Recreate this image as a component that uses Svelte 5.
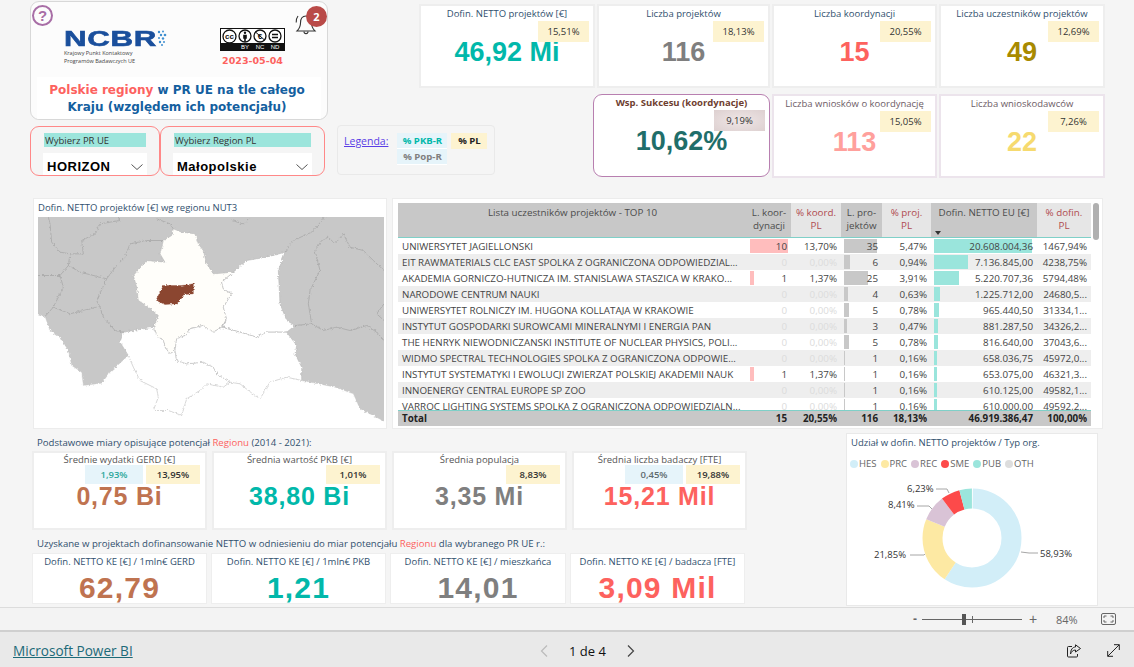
<script>
  const kpiTop = [
    { title: 'Dofin. NETTO projektów [€]', value: '46,92 Mi', pct: '15,51%', color: '#01b8aa' },
    { title: 'Liczba projektów', value: '116', pct: '18,13%', color: '#7f7f7f' },
    { title: 'Liczba koordynacji', value: '15', pct: '20,55%', color: '#fd625e' },
    { title: 'Liczba uczestników projektów', value: '49', pct: '12,69%', color: '#a88a00' }
  ];

  const potential = [
    { title: 'Średnie wydatki GERD [€]', value: '0,75 Bi', blue: '1,93%', blueColor: '#2fa89c', pct: '13,95%', color: '#bf7350' },
    { title: 'Średnia wartość PKB [€]', value: '38,80 Bi', pct: '1,01%', color: '#01b8aa' },
    { title: 'Średnia populacja', value: '3,35 Mi', pct: '8,83%', color: '#7f7f7f' },
    { title: 'Średnia liczba badaczy [FTE]', value: '15,21 Mil', blue: '0,45%', blueColor: '#5f6b70', pct: '19,88%', color: '#fd625e' }
  ];

  const ratios = [
    { title: 'Dofin. NETTO KE [€] / 1mln€ GERD', value: '62,79', color: '#bf7350' },
    { title: 'Dofin. NETTO KE [€] / 1mln€ PKB', value: '1,21', color: '#01b8aa' },
    { title: 'Dofin. NETTO KE [€] / mieszkańca', value: '14,01', color: '#7f7f7f' },
    { title: 'Dofin. NETTO KE [€] / badacza [FTE]', value: '3,09 Mil', color: '#fd625e' }
  ];

  const rows = [
    ['UNIWERSYTET JAGIELLONSKI', 10, '13,70%', 35, '5,47%', 20608004.36, '20.608.004,36', '1467,94%'],
    ['EIT RAWMATERIALS CLC EAST SPOLKA Z OGRANICZONA ODPOWIEDZIAL...', 0, '0,00%', 6, '0,94%', 7136845, '7.136.845,00', '4238,75%'],
    ['AKADEMIA GORNICZO-HUTNICZA IM. STANISLAWA STASZICA W KRAKO...', 1, '1,37%', 25, '3,91%', 5220707.36, '5.220.707,36', '5794,48%'],
    ['NARODOWE CENTRUM NAUKI', 0, '0,00%', 4, '0,63%', 1225712, '1.225.712,00', '24680,5...'],
    ['UNIWERSYTET ROLNICZY IM. HUGONA KOLLATAJA W KRAKOWIE', 0, '0,00%', 5, '0,78%', 965440.5, '965.440,50', '31334,1...'],
    ['INSTYTUT GOSPODARKI SUROWCAMI MINERALNYMI I ENERGIA PAN', 0, '0,00%', 3, '0,47%', 881287.5, '881.287,50', '34326,2...'],
    ['THE HENRYK NIEWODNICZANSKI INSTITUTE OF NUCLEAR PHYSICS, POLI...', 0, '0,00%', 5, '0,78%', 816640, '816.640,00', '37043,6...'],
    ['WIDMO SPECTRAL TECHNOLOGIES SPOLKA Z OGRANICZONA ODPOWIE...', 0, '0,00%', 1, '0,16%', 658036.75, '658.036,75', '45972,0...'],
    ['INSTYTUT SYSTEMATYKI I EWOLUCJI ZWIERZAT POLSKIEJ AKADEMII NAUK', 1, '1,37%', 1, '0,16%', 653075, '653.075,00', '46321,3...'],
    ['INNOENERGY CENTRAL EUROPE SP ZOO', 0, '0,00%', 1, '0,16%', 610125, '610.125,00', '49582,1...'],
    ['VARROC LIGHTING SYSTEMS SPOLKA Z OGRANICZONA ODPOWIEDZIALN...', 0, '0,00%', 1, '0,16%', 610000, '610.000,00', '49592,2...']
  ];

  const legend = [
    ['HES', '#d2eef8'], ['PRC', '#fde9a3'], ['REC', '#d9c3d6'],
    ['SME', '#fd4a4a'], ['PUB', '#9be5dc'], ['OTH', '#dddddd']
  ];

  // donut slices, clockwise from the top
  const shares = [58.93, 21.85, 8.41, 6.23, 4.1, 0.48];
  const radius = 39.5;
  const circ = 2 * Math.PI * radius;
  let acc = 0.3;
  const slices = shares.map((s, i) => {
    const slice = { color: legend[i][1], len: (s / 100) * circ, offset: -(acc / 100) * circ };
    acc += s;
    return slice;
  });
</script>

<div class="page">
  <section class="top">
    <div class="top-left">
      <div class="brand">
        <div class="brand-head">
          <span class="help">?</span>
          <div class="logo">
            <div class="logo-mark">
              <span class="ncbr">NCBR</span>
              <svg width="10" height="16" viewBox="0 0 10 16" fill="#3f8fd0">
                <circle cx="2" cy="2" r="1.2" /><circle cx="6" cy="1.5" r="1" /><circle cx="4" cy="5" r="1.2" />
                <circle cx="8" cy="5" r="1.3" /><circle cx="2" cy="8" r="1" /><circle cx="6" cy="8.5" r="1.2" />
                <circle cx="3" cy="12" r="1.2" /><circle cx="7" cy="12" r="1" /><circle cx="5" cy="15" r="1" />
              </svg>
            </div>
            <div class="logo-sub">Krajowy Punkt Kontaktowy</div>
            <div class="logo-sub">Programów Badawczych UE</div>
          </div>
          <div class="licence">
            <svg width="65" height="23" viewBox="0 0 65 23">
              <rect x="0.5" y="0.5" width="64" height="22" fill="#fff" stroke="#111" />
              <rect x="1" y="15" width="63" height="7.5" fill="#111" />
              <g fill="#fff" stroke="#111" stroke-width="1.3">
                <circle cx="9.5" cy="8.5" r="6.5" /><circle cx="25" cy="8" r="6" /><circle cx="40" cy="8" r="6" /><circle cx="55" cy="8" r="6" />
              </g>
              <text x="9.5" y="11" class="cc-mark">cc</text>
              <circle cx="25" cy="4.8" r="1.2" fill="#111" />
              <path d="M23.2 6.8h3.6v4h-1v3h-1.6v-3h-1z" fill="#111" />
              <text x="40" y="11" class="cc-mark">€</text>
              <path d="M35.5 4l9 8" stroke="#111" />
              <path d="M52 6.5h6M52 9.5h6" stroke="#111" stroke-width="1.4" />
              <text x="25" y="21" class="cc-tag">BY</text>
              <text x="40" y="21" class="cc-tag">NC</text>
              <text x="55" y="21" class="cc-tag">ND</text>
            </svg>
            <div class="date">2023-05-04</div>
          </div>
          <div class="bell">
            <svg width="23" height="25" viewBox="0 0 23 25" fill="none" stroke="#333" stroke-width="1.1">
              <path d="M11 4c-4 0-5.500 3-5.500 7 0 4-1.500 6-3.500 8h18c-2-2-3.500-4-3.500-8 0-4-1.500-7-5.500-7z" />
              <path d="M9 19.500c0 2.800 4 2.800 4 0" />
              <path d="M3 4C1.500 6 1 8 1.200 10.500M19 4c1.500 2 2 4 1.800 6.500" />
            </svg>
            <span class="bell-count">2</span>
          </div>
        </div>
        <h1 class="headline"><span class="red">Polskie regiony</span> w PR UE na tle całego<br />Kraju (względem ich potencjału)</h1>
      </div>

      <div class="filters">
        <div class="filter small">
          <div class="filter-label">Wybierz PR UE</div>
          <div class="filter-box">HORIZON
            <svg width="12" height="6" viewBox="0 0 12 6" fill="none" stroke="#555"><path d="M.5.5l5.500 5 5.500-5" /></svg>
          </div>
        </div>
        <div class="filter large">
          <div class="filter-label">Wybierz Region PL</div>
          <div class="filter-box">Małopolskie
            <svg width="12" height="6" viewBox="0 0 12 6" fill="none" stroke="#555"><path d="M.5.5l5.500 5 5.500-5" /></svg>
          </div>
        </div>
      </div>
    </div>

    <div class="top-right">
      <div class="kpi-row first">
        {#each kpiTop as kpi}
          <div class="kpi">
            <div class="kpi-title">{kpi.title}</div>
            <div class="kpi-value" style="color: {kpi.color}">{kpi.value}</div>
            <div class="badge">{kpi.pct}</div>
          </div>
        {/each}
      </div>
      <div class="second-line">
        <div class="legend-card">
          <span class="legend-link">Legenda:</span>
          <div class="chips">
            <span class="chip blue teal">% PKB-R</span>
            <span class="chip yellow">% PL</span>
            <span class="chip blue">% Pop-R</span>
          </div>
        </div>
        <div class="kpi-row second">
          <div class="kpi success">
            <div class="kpi-title">Wsp. Sukcesu (koordynacje)</div>
            <div class="kpi-value" style="color: #1f6e6a">10,62%</div>
            <div class="badge grey">9,19%</div>
          </div>
          <div class="kpi soft">
            <div class="kpi-title">Liczba wniosków o koordynację</div>
            <div class="kpi-value" style="color: #ffa09c">113</div>
            <div class="badge">15,05%</div>
          </div>
          <div class="kpi soft">
            <div class="kpi-title">Liczba wnioskodawców</div>
            <div class="kpi-value" style="color: #f6da6f">22</div>
            <div class="badge">7,26%</div>
          </div>
        </div>
      </div>
    </div>
  </section>

  <section class="middle">
    <div class="map-card">
      <div class="map-title">Dofin. NETTO projektów [€] wg regionu NUT3</div>
      <svg class="map" width="346" height="207" viewBox="114 80 1038 620">
        <defs>
          <filter id="rough" x="-5%" y="-5%" width="110%" height="110%" color-interpolation-filters="sRGB">
            <feTurbulence type="fractalNoise" baseFrequency="0.14" numOctaves="2" seed="4" />
            <feDisplacementMap in="SourceGraphic" scale="10" xChannelSelector="R" yChannelSelector="G" />
          </filter>
        </defs>
        <g filter="url(#rough)">
          <path fill="#c8c8c8" stroke="#c8c8c8" d="M100 70H1170V700L1152 692L1080 655L1060 610L1005 590L905 570L860 540L600 500L400 470L385 495L330 545L305 578L250 585L245 545L215 525L205 480L180 440L150 420L135 378L100 365Z" />
          <g fill="none" stroke="#a2a2a2" stroke-width="2">
            <path d="M114 255L180 255L205 225L240 245L320 265L290 330L300 350L310 380L345 420L370 425" />
            <path d="M205 225L210 190L180 185L155 155L150 100L145 80" />
            <path d="M210 190L250 190L245 150L285 130L300 100L360 90L355 80" />
            <path d="M180 255L190 290L160 350L135 378" />
            <path d="M160 350L210 370L290 350" />
            <path d="M320 265L350 225L375 200L390 160L440 150L490 150" />
            <path d="M470 85L510 100L520 115" />
            <path d="M695 90L730 100L745 85" />
            <path d="M855 185L880 150L935 125L975 80" />
            <path d="M965 150L985 140L1005 160L1030 130L1050 170L1090 180L1120 210L1152 240" />
            <path d="M965 150L945 180L960 240L930 300L925 340L935 400L970 420L1010 410L1050 420L1100 405L1130 425L1152 450" />
            <path d="M885 405L935 400" />
            <path d="M1152 340L1130 370L1152 390" />
          </g>
          <g fill="#fff" stroke="#b4b4b4" stroke-width="1.6">
            <path fill="#fffefa" d="M520 115L545 125L585 130L595 160L610 180L620 220L640 250L700 245L665 275L670 295L695 310L670 350L680 385L665 410L640 425L610 405L570 415L555 435L530 445L525 480L510 490L495 470L490 450L470 435L460 410L475 375L445 350L415 330L410 290L400 255L440 210L495 215L480 190L490 150L515 135Z" />
            <path d="M700 245L740 210L800 200L855 185L835 240L840 340L860 390L885 405L860 425L800 425L770 440L720 425L670 410L680 385L670 350L695 310L670 295L665 275Z" />
            <path d="M370 425L430 415L460 410L470 435L490 450L495 470L510 490L525 480L530 510L560 520L610 515L640 530L650 550L690 575L670 590L620 580L600 600L560 625L545 675L505 660L460 660L475 620L470 595L420 570L400 530L385 495L360 455Z" />
            <path d="M530 445L555 435L570 415L610 405L640 425L665 410L720 425L770 440L800 425L860 425L890 465L885 490L905 530L905 570L860 560L810 575L780 625L745 600L720 580L690 575L650 550L640 530L610 515L560 520L530 510L525 480Z" />
          </g>
          <path fill="#8b4630" stroke="#8b4630" d="M470 325L490 285L545 285L580 280L580 310L555 312L530 340L495 342L475 333Z" />
        </g>
      </svg>
    </div>

    <div class="table-card">
      <div class="table">
        <div class="row head">
          <div class="name-head">Lista uczestników projektów - TOP 10</div>
          <div class="dark">L. koor-<br />dynacji</div>
          <div class="pale">% koord.<br />PL</div>
          <div class="dark">L. pro-<br />jektów</div>
          <div class="pale">% proj.<br />PL</div>
          <div class="dark sorted">Dofin. NETTO EU [€]<i class="sort"></i></div>
          <div class="pale">% dofin.<br />PL</div>
        </div>
        <div class="rows">
          {#each rows as r, i}
            <div class="row" class:odd={i % 2 === 1}>
              <div class="name">{r[0]}</div>
              <div class="num" class:zero={r[1] === 0}>
                {#if r[1]}<i class="bar" style="width: {r[1] * 3.8}px; background: #ffbdbd"></i>{/if}
                <span>{r[1]}</span>
              </div>
              <div class="num" class:zero={r[1] === 0}><span>{r[2]}</span></div>
              <div class="num">
                <i class="bar" style="width: {r[3] * 0.94}px; background: #c8c8c8"></i>
                <span>{r[3]}</span>
              </div>
              <div class="num"><span>{r[4]}</span></div>
              <div class="num">
                <i class="bar" style="width: {r[5] / 210000}px; background: #9ae5dc"></i>
                <span>{r[6]}</span>
              </div>
              <div class="num"><span>{r[7]}</span></div>
            </div>
          {/each}
        </div>
        <div class="row total">
          <div class="name">Total</div>
          <div class="num">15</div>
          <div class="num">20,55%</div>
          <div class="num">116</div>
          <div class="num">18,13%</div>
          <div class="num">46.919.386,47</div>
          <div class="num">100,00%</div>
        </div>
      </div>
      <div class="thumb"></div>
    </div>
  </section>

  <section class="bottom">
    <div class="measures">
      <div class="caption">Podstawowe miary opisujące potencjał <span class="red">Regionu</span> (2014 - 2021):</div>
      <div class="measure-row">
        {#each potential as m}
          <div class="measure">
            <div class="measure-title">{m.title}</div>
            <div class="measure-badges">
              {#if m.blue}<span class="mini blue" style="color: {m.blueColor}">{m.blue}</span>{/if}
              <span class="mini yellow">{m.pct}</span>
            </div>
            <div class="measure-value" style="color: {m.color}">{m.value}</div>
          </div>
        {/each}
      </div>
      <div class="caption lower">Uzyskane w projektach dofinansowanie NETTO w odniesieniu do miar potencjału <span class="red">Regionu</span> dla wybranego PR UE r.:</div>
      <div class="ratio-row">
        {#each ratios as m}
          <div class="ratio">
            <div class="ratio-title">{m.title}</div>
            <div class="ratio-value" style="color: {m.color}">{m.value}</div>
          </div>
        {/each}
      </div>
    </div>

    <div class="donut-card">
      <div class="donut-title">Udział w dofin. NETTO projektów / Typ org.</div>
      <div class="donut-legend">
        {#each legend as l}
          <span class="key"><i style="background: {l[1]}"></i>{l[0]}</span>
        {/each}
      </div>
      <svg class="donut" width="250" height="120" viewBox="0 0 250 120">
        <g transform="translate(125 68) rotate(-90)" fill="none" stroke-width="20">
          {#each slices as s}
            <circle r={radius} stroke={s.color} stroke-dasharray="{s.len} {circ}" stroke-dashoffset={s.offset} />
          {/each}
        </g>
        <g fill="none" stroke="#a6a6a6">
          <path d="M174 82l8 1h9" />
          <path d="M63 85h14l1-1" />
          <path d="M70 36h12l3 3" />
          <path d="M89 19h11l2 4" />
        </g>
        <g class="slice-label">
          <text x="193" y="87">58,93%</text>
          <text x="27" y="88">21,85%</text>
          <text x="41" y="38">8,41%</text>
          <text x="60" y="22">6,23%</text>
        </g>
      </svg>
    </div>
  </section>
</div>

<div class="zoombar">
  <span class="zoom-sign">-</span>
  <div class="slider"><i class="tick"></i><i class="handle"></i></div>
  <span class="zoom-sign plus">+</span>
  <span class="zoom-pct">84%</span>
  <svg width="15" height="12" viewBox="0 0 15 12" fill="none" stroke="#666">
    <rect x="0.5" y="0.5" width="14" height="11" rx="1.500" />
    <path d="M3 5V3h2.500M12 5V3H9.500M3 7v2h2.500M12 7v2H9.500" />
  </svg>
</div>

<footer class="footer">
  <span class="brand-link">Microsoft Power BI</span>
  <div class="pager">
    <svg width="8" height="12" viewBox="0 0 8 12" fill="none" stroke="#bbb" stroke-width="1.200"><path d="M7 .5L1.500 6 7 11.500" /></svg>
    <span>1 de 4</span>
    <svg width="8" height="12" viewBox="0 0 8 12" fill="none" stroke="#444" stroke-width="1.200"><path d="M1 .5L6.500 6 1 11.500" /></svg>
  </div>
  <div class="footer-icons">
    <svg width="14" height="14" viewBox="0 0 14 14" fill="none" stroke="#222">
      <path d="M5 2.500H1.500a1 1 0 0 0-1 1v8.500a1 1 0 0 0 1 1h8a1 1 0 0 0 1-1v-2" />
      <path d="M8.500.8L13.500 4.500 8.500 8V6C6 6 4.500 7.500 3.500 10 3.500 6 5.500 3 8.500 3z" />
    </svg>
    <svg width="13" height="13" viewBox="0 0 13 13" fill="none" stroke="#222">
      <path d="M.8 12.200L12.200.8M7 .7h5.300V6M.7 7v5.300H6" />
    </svg>
  </div>
</footer>

<style>
  :global(body) {
    margin: 0;
    background: #f5f5f5;
    font-family: "Open Sans", "Noto Sans", sans-serif;
    overflow: hidden;
  }

  .page {
    height: 607px;
    box-sizing: border-box;
    padding-top: 1px;
    overflow: hidden;
  }

  .red {
    color: #fd625e;
  }

  /* top band */
  .top {
    display: flex;
    height: 197px;
    padding-left: 30px;
  }

  .top-left {
    width: 307px;
  }

  .brand {
    width: 298px;
    height: 119px;
    box-sizing: border-box;
    border: 1px solid #d8d8d8;
    border-radius: 9px;
    background: #fcfcfc;
    padding: 0 6px;
    overflow: hidden;
  }

  .brand-head {
    position: relative;
    height: 75px;
  }

  .help {
    position: absolute;
    left: -5px;
    top: 3px;
    width: 17px;
    height: 17px;
    border: 2.5px solid #a86ea6;
    border-radius: 50%;
    color: #a86ea6;
    font: bold 15px/17px "Liberation Sans", sans-serif;
    text-align: center;
  }

  .logo {
    position: absolute;
    left: 27px;
    top: 28px;
  }

  .logo-mark {
    display: flex;
    gap: 1px;
    align-items: flex-start;
    height: 19px;
  }

  .ncbr {
    font: bold 22px/17px "Liberation Sans", sans-serif;
    color: #1a4f9c;
    letter-spacing: 0.5px;
    -webkit-text-stroke: 0.6px #1a4f9c;
    transform: scaleX(1.42);
    transform-origin: left;
    margin-right: 26px;
  }

  .logo-sub {
    font-size: 5.500px;
    line-height: 8px;
    color: #444;
    white-space: nowrap;
  }

  .logo-sub:first-of-type {
    margin-top: 6px;
  }

  .licence {
    position: absolute;
    left: 183px;
    top: 26px;
    width: 65px;
  }

  .licence svg {
    display: block;
  }

  .cc-mark {
    font: bold 8px "Liberation Sans", sans-serif;
    fill: #111;
    text-anchor: middle;
  }

  .cc-tag {
    font: 6px "Liberation Sans", sans-serif;
    fill: #fff;
    text-anchor: middle;
  }

  .date {
    margin-top: 4px;
    font: bold 9.500px/12px "DejaVu Sans", sans-serif;
    color: #fd625e;
    text-align: center;
    white-space: nowrap;
  }

  .bell {
    position: absolute;
    left: 258px;
    top: 10px;
  }

  .bell-count {
    position: absolute;
    left: 11px;
    top: -6px;
    width: 21px;
    height: 21px;
    border-radius: 50%;
    background: #b94a48;
    color: #fff;
    font: bold 11px/21px "Open Sans", sans-serif;
    text-align: center;
  }

  .headline {
    margin: 0;
    background: #fff;
    height: 44px;
    padding: 5px 4px 0 0;
    box-sizing: border-box;
    font: bold 12px/17px "DejaVu Sans", sans-serif;
    color: #14609f;
    text-align: center;
    white-space: nowrap;
  }

  .filters {
    display: flex;
    margin-top: 6px;
  }

  .filter {
    height: 50px;
    box-sizing: border-box;
    border: 1px solid #f88;
    border-radius: 9px;
    padding: 6px 13px 0;
    overflow: hidden;
  }

  .filter.small {
    width: 130px;
  }

  .filter.large {
    width: 165px;
  }

  .filter-label {
    height: 14px;
    background: #9ce5dc;
    font-size: 9.500px;
    line-height: 15px;
    color: #333;
    padding-left: 1px;
    white-space: nowrap;
  }

  .filter-box {
    display: flex;
    justify-content: space-between;
    align-items: center;
    margin: 6px -1px 0;
    height: 23px;
    padding: 5px 4px 0 4px;
    box-sizing: border-box;
    background: #fff;
    font: bold 13px/18px "Liberation Sans", sans-serif;
    letter-spacing: 0.5px;
    color: #000;
  }

  /* KPI cards */
  .top-right {
    flex: 1;
  }

  .kpi-row {
    display: grid;
  }

  .kpi-row.first {
    margin: 3px 0 0 82px;
    grid-template-columns: 176px 173px 165px 166px;
    column-gap: 2px;
    width: 685px;
  }

  .second-line {
    display: flex;
    margin-top: 6px;
  }

  .legend-card {
    display: flex;
    width: 158px;
    height: 50px;
    box-sizing: border-box;
    margin-top: 31px;
    border: 1px solid #e9e9e9;
    border-radius: 4px;
    padding: 7px 0 0 6px;
    gap: 9px;
  }

  .legend-link {
    color: #5a3de6;
    font-size: 10.500px;
    text-decoration: underline;
    line-height: 16px;
  }

  .chips {
    display: grid;
    grid-template-columns: 50px 36px;
    grid-auto-rows: 16px;
    column-gap: 4px;
  }

  .chip {
    font-size: 9.600px;
    font-weight: 700;
    line-height: 15px;
    text-align: center;
    color: #7f7f7f;
  }

  .chip.blue {
    background: #e6f4fa;
    border-bottom: 1px solid #fff;
  }

  .chip.teal {
    color: #01b8aa;
  }

  .chip.yellow {
    background: #fdf3d0;
    color: #222;
  }

  .kpi-row.second {
    margin-left: 98px;
    grid-template-columns: 177px 165px 166px;
    column-gap: 2px;
  }

  .kpi {
    position: relative;
    height: 84px;
    box-sizing: border-box;
    background: #fff;
    border: 2px solid #eeeeee;
    text-align: center;
  }

  .kpi.soft {
    border-color: #ece4ec;
  }

  .kpi.success {
    border: 1px solid #b87fb0;
    border-radius: 9px;
    height: 83px;
  }

  .kpi-title {
    font-size: 9.500px;
    line-height: 14px;
    padding-top: 1px;
    color: #31506e;
    white-space: nowrap;
  }

  .kpi.soft .kpi-title {
    color: #6d5c66;
  }

  .success .kpi-title {
    font-weight: 700;
    color: #6e4030;
  }

  .kpi-value {
    margin-top: 15px;
    font: bold 27px/32px "Liberation Sans", sans-serif;
  }

  .badge {
    position: absolute;
    right: 4px;
    top: 15px;
    width: 51px;
    height: 21px;
    background: #fdf3d0;
    font-size: 9.500px;
    line-height: 21px;
    color: #333;
  }

  .badge.grey {
    background: radial-gradient(#efe6e6, #ddd0d0);
  }

  /* map + table */
  .middle {
    display: flex;
    height: 231px;
    margin-left: 33px;
    gap: 5px;
  }

  .map-card {
    width: 354px;
    box-sizing: border-box;
    height: 231px;
    background: #fff;
    border: 1px solid #ececec;
    padding: 1px 2px 0 4px;
    overflow: hidden;
  }

  .map-title {
    height: 17px;
    font-size: 9.500px;
    line-height: 16px;
    color: #31506e;
  }

  .map {
    display: block;
  }

  .table-card {
    position: relative;
    width: 711px;
    height: 231px;
    box-sizing: border-box;
    background: #fff;
    border: 1px solid #ececec;
    padding: 4px 0 0 5px;
    font-size: 9.800px;
    color: #444;
  }

  .thumb {
    position: absolute;
    left: 700px;
    top: 4px;
    width: 6px;
    height: 37px;
    border-radius: 3px;
    background: #b0b0b0;
  }

  .row {
    display: grid;
    grid-template-columns: 349px 44px 50px 41px 49px 106px 54px;
    width: 693px;
    height: 16px;
    line-height: 18px;
    background: #fff;
  }

  .row.odd {
    background: #eeeeee;
  }

  .row.head {
    height: 35px;
    line-height: 13px;
    text-align: center;
    border-bottom: 1px solid #7fd0c8;
    box-sizing: border-box;
  }

  .head > div {
    padding-top: 3px;
    position: relative;
  }

  .name-head, .dark {
    background: #c8c8c8;
    color: #4c4c4c;
  }

  .pale {
    background: #e6e6e6;
    color: #b04a50;
  }

  .sort {
    position: absolute;
    left: 4px;
    bottom: 2px;
    border: 3px solid transparent;
    border-top: 4px solid #333;
    border-bottom: 0;
  }

  .rows {
    height: 172px;
    overflow: hidden;
  }

  .name {
    padding-left: 4px;
    white-space: nowrap;
    overflow: hidden;
  }

  .num {
    position: relative;
    text-align: right;
    padding-right: 4px;
    white-space: nowrap;
  }

  .num span {
    position: relative;
  }

  .num.zero {
    color: #dcdcdc;
  }

  .bar {
    position: absolute;
    left: 3px;
    top: 1px;
    height: 14px;
  }

  .row.total {
    background: #c8c8c8;
    border-top: 1px solid #7fd0c8;
    font-weight: 700;
    color: #222;
    height: 16px;
    line-height: 15px;
    box-sizing: border-box;
  }

  /* lower band */
  .bottom {
    display: flex;
    margin-left: 32px;
    margin-top: 8px;
  }

  .measures {
    width: 814px;
  }

  .caption {
    height: 14px;
    font-size: 9.600px;
    line-height: 12px;
    padding-left: 5px;
    color: #31506e;
    white-space: nowrap;
  }

  .caption.lower {
    margin-top: 8px;
    height: 15px;
  }

  .measure-row {
    display: grid;
    grid-template-columns: repeat(4, 175px);
    column-gap: 5px;
  }

  .measure {
    position: relative;
    height: 79px;
    box-sizing: border-box;
    background: #fff;
    border: 2px solid #eeeeee;
    text-align: center;
  }

  .measure-title {
    font-size: 9.500px;
    line-height: 14px;
    color: #555;
  }

  .measure-badges {
    position: absolute;
    right: 5px;
    top: 12px;
    display: flex;
    gap: 3px;
  }

  .mini {
    height: 19px;
    font-size: 9.500px;
    font-weight: 600;
    line-height: 19px;
    text-align: center;
  }

  .mini.blue {
    width: 58px;
    background: #e6f4fa;
  }

  .mini.yellow {
    width: 54px;
    background: #fdf3d0;
    color: #333;
  }

  .measure-value {
    margin-top: 14px;
    font: bold 25px/30px "Liberation Sans", sans-serif;
    letter-spacing: 0.8px;
  }

  .ratio-row {
    display: grid;
    grid-template-columns: 175px 175px 176px 175px;
    column-gap: 4px;
  }

  .ratio {
    height: 51px;
    box-sizing: border-box;
    background: #fff;
    border: 1px solid #eeeeee;
    text-align: center;
    overflow: hidden;
  }

  .ratio-title {
    font-size: 9.500px;
    line-height: 15px;
    color: #31506e;
    white-space: nowrap;
  }

  .ratio-value {
    margin-top: 3px;
    font: bold 30px/32px "Liberation Sans", sans-serif;
    letter-spacing: 1.2px;
  }

  .donut-card {
    width: 252px;
    height: 173px;
    box-sizing: border-box;
    margin-top: -4px;
    background: #fff;
    border: 1px solid #e9e9e9;
  }

  .donut-title {
    font-size: 9.500px;
    line-height: 14px;
    padding: 2px 0 0 4px;
    color: #31506e;
  }

  .donut-legend {
    display: flex;
    gap: 4px;
    margin: 7px 0 0 3px;
    font-size: 9.500px;
    line-height: 13px;
    color: #666;
  }

  .key {
    display: flex;
    align-items: center;
    gap: 1px;
  }

  .key i {
    width: 8px;
    height: 8px;
    border-radius: 50%;
  }

  .donut {
    display: block;
  }

  .slice-label {
    font: 9.500px "Open Sans", sans-serif;
    fill: #333;
  }

  /* power bi chrome */
  .zoombar {
    display: flex;
    align-items: center;
    height: 23px;
    box-sizing: border-box;
    border-top: 1px solid #dcdcdc;
    background: #f3f3f3;
    padding-left: 913px;
    color: #666;
  }

  .zoom-sign {
    width: 9px;
    font: bold 12px/14px "Liberation Sans", sans-serif;
  }

  .zoom-sign.plus {
    width: 27px;
    margin-left: 7px;
    font-size: 14px;
    font-weight: 400;
  }

  .slider {
    position: relative;
    width: 100px;
    height: 1px;
    background: #666;
  }

  .tick {
    position: absolute;
    left: 50px;
    top: -3px;
    width: 1px;
    height: 7px;
    background: #666;
  }

  .handle {
    position: absolute;
    left: 40px;
    top: -5px;
    width: 4px;
    height: 11px;
    background: #555;
  }

  .zoom-pct {
    width: 45px;
    font-size: 11px;
  }

  .footer {
    position: relative;
    display: flex;
    align-items: center;
    height: 37px;
    box-sizing: border-box;
    border-top: 2px solid #cfcfcf;
    background: #e9e9e9;
    padding: 2px 0 0 13px;
  }

  .brand-link {
    width: 527px;
    font-size: 13.600px;
    color: #1c6a78;
    text-decoration: underline;
  }

  .pager {
    display: flex;
    align-items: center;
    gap: 21px;
    font-size: 13px;
    color: #111;
  }

  .footer-icons {
    display: flex;
    align-items: center;
    gap: 26px;
    margin-left: 432px;
  }
</style>
